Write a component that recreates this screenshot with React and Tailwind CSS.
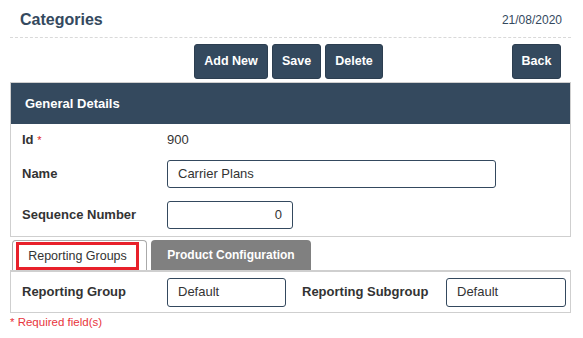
export default function App() {
  const dark = "bg-[#34495e]";
  const btn = `${dark} h-[35px] rounded-[3px] border border-[#2c3e50] font-['Liberation_Sans',Arial,sans-serif] text-[12.5px] font-bold text-white`;
  return (
    <div className="w-[583px] h-[338px] bg-white font-['Liberation_Sans',Arial,sans-serif] text-[#333]">
      <div className="ml-[10px] w-[561px]">
        {/* page header */}
        <div className="h-[38px] flex items-center justify-between pl-[10px] pr-[9px] border-b border-dashed border-[#d9d9d9]">
          <h1 className="text-[16px] font-bold text-[#34495e] mt-[3px]">Categories</h1>
          <span className="text-[12px] text-[#34495e] mt-[3px]">21/08/2020</span>
        </div>

        {/* toolbar */}
        <div className="mt-[6px] flex items-center h-[34px] pr-[4px]">
          <div className="flex-1" />
          <div className="flex gap-[4px]">
            <button className={`${btn} w-[74px]`}>Add New</button>
            <button className={`${btn} w-[49px]`}>Save</button>
            <button className={`${btn} w-[58px]`}>Delete</button>
          </div>
          <div className="flex-1 flex justify-end">
            <button className={`${btn} w-[49px] mr-[6px]`}>Back</button>
          </div>
        </div>

        {/* general details panel */}
        <div className="mt-[4px] border border-[#cfcfcf]">
          <div className={`${dark} h-[41px] flex items-center pl-[14px] text-white font-bold text-[13px]`}>
            General Details
          </div>
          <div className="pl-[11px] text-[13px]">
            <div className="h-[29px] flex items-center mt-[1px]">
              <span className="w-[145px] font-bold">Id <span className="text-[#e02424] font-normal text-[11px]">*</span></span>
              <span>900</span>
            </div>
            <div className="h-[36px] flex items-center mt-[2px]">
              <span className="w-[145px] font-bold">Name</span>
              <div className="w-[329px] h-[28px] border border-[#34495e] rounded-[3px] flex items-center px-[10px]">Carrier Plans</div>
            </div>
            <div className="h-[36px] flex items-center mt-[5px]">
              <span className="w-[145px] font-bold">Sequence Number</span>
              <div className="w-[126px] h-[28px] border border-[#34495e] rounded-[3px] flex items-center justify-end px-[10px]">0</div>
            </div>
            <div className="h-[3px]" />
          </div>
        </div>

        {/* tabs */}
        <div className="mt-[3px] flex items-end gap-[4px] pl-[2px] h-[30px]">
          <div className="h-[30px] w-[135px] border border-[#aaa] border-b-0 rounded-t-[4px] bg-white pt-[1px] pl-[3px] pr-[7px]">
            <div className="h-[28px] border-[3px] border-[#e8202a] flex items-center justify-center text-[12.5px]">Reporting Groups</div>
          </div>
          <div className="h-[30px] w-[160px] bg-[#808080] rounded-t-[4px] flex items-center justify-center text-white font-bold text-[12px]">
            Product Configuration
          </div>
        </div>
        <div className="h-[43px] border border-[#cfcfcf] border-t-[2px] flex items-center pl-[11px] text-[13px]">
          <span className="w-[145px] font-bold">Reporting Group</span>
          <div className="w-[119px] h-[29px] border border-[#34495e] rounded-[3px] flex items-center px-[10px]">Default</div>
          <span className="ml-[16px] w-[144px] font-bold">Reporting Subgroup</span>
          <div className="w-[120px] h-[29px] border border-[#34495e] rounded-[3px] flex items-center px-[10px]">Default</div>
        </div>
        <div className="mt-[1px] text-[11.5px] text-[#e8343c]">* Required field(s)</div>
      </div>
    </div>
  );
}
